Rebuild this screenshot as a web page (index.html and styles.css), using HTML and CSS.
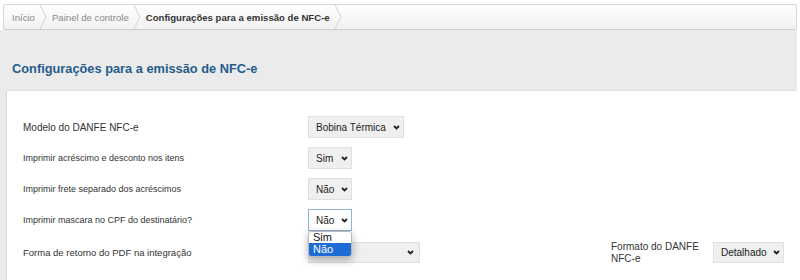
FILE: index.html
```html
<!DOCTYPE html>
<html lang="pt-BR">
<head>
<meta charset="utf-8">
<title>Configurações para a emissão de NFC-e</title>
<link rel="stylesheet" href="styles.css">
</head>
<body>
<nav class="crumbs">
  <a class="crumb">Início</a>
  <svg class="sep" width="8" height="24" viewBox="0 0 8 24"><path d="M1 0 L7 12 L1 24" fill="none" stroke="#d2d2d2" stroke-width="1"/></svg>
  <a class="crumb">Painel de controle</a>
  <svg class="sep" width="8" height="24" viewBox="0 0 8 24"><path d="M1 0 L7 12 L1 24" fill="none" stroke="#d2d2d2" stroke-width="1"/></svg>
  <span class="crumb current">Configurações para a emissão de NFC-e</span>
  <svg class="sep" width="8" height="24" viewBox="0 0 8 24"><path d="M1 0 L7 12 L1 24" fill="none" stroke="#d2d2d2" stroke-width="1"/></svg>
</nav>
<main class="main">
  <h1 class="title">Configurações para a emissão de NFC-e</h1>
  <section class="panel">
    <div class="row">
      <label class="label big">Modelo do DANFE NFC-e</label>
      <span class="select w-bobina">Bobina Térmica<svg class="chev" width="7" height="5" viewBox="0 0 7 5"><path d="M1 1 L3.5 3.5 L6 1" fill="none" stroke="#222" stroke-width="1.8"/></svg></span>
    </div>
    <div class="row">
      <label class="label">Imprimir acréscimo e desconto nos itens</label>
      <span class="select w-simnao">Sim<svg class="chev" width="7" height="5" viewBox="0 0 7 5"><path d="M1 1 L3.5 3.5 L6 1" fill="none" stroke="#222" stroke-width="1.8"/></svg></span>
    </div>
    <div class="row">
      <label class="label">Imprimir frete separado dos acréscimos</label>
      <span class="select w-simnao">Não<svg class="chev" width="7" height="5" viewBox="0 0 7 5"><path d="M1 1 L3.5 3.5 L6 1" fill="none" stroke="#222" stroke-width="1.8"/></svg></span>
    </div>
    <div class="row">
      <label class="label">Imprimir mascara no CPF do destinatário?</label>
      <span class="select-wrap">
        <span class="select w-simnao focused">Não<svg class="chev" width="7" height="5" viewBox="0 0 7 5"><path d="M1 1 L3.5 3.5 L6 1" fill="none" stroke="#222" stroke-width="1.8"/></svg></span>
        <ul class="dropdown">
          <li class="opt">Sim</li>
          <li class="opt active">Não</li>
        </ul>
      </span>
    </div>
    <div class="row last">
      <label class="label mid">Forma de retorno do PDF na integração</label>
      <span class="select w-forma"><svg class="chev" width="7" height="5" viewBox="0 0 7 5"><path d="M1 1 L3.5 3.5 L6 1" fill="none" stroke="#222" stroke-width="1.8"/></svg></span>
      <label class="label big side">Formato do DANFE NFC-e</label>
      <span class="select w-detalhado">Detalhado<svg class="chev" width="7" height="5" viewBox="0 0 7 5"><path d="M1 1 L3.5 3.5 L6 1" fill="none" stroke="#222" stroke-width="1.8"/></svg></span>
    </div>
  </section>
</main>
</body>
</html>
```

FILE: styles.css
```css
* { box-sizing: border-box; }
html, body { margin: 0; padding: 0; }
body {
  background: #fff;
  font-family: "Liberation Sans", Arial, sans-serif;
  color: #333;
  width: 800px;
  height: 280px;
  overflow: hidden;
}

.crumbs {
  margin: 4px 3px 0 3px;
  height: 26px;
  border: 1px solid #d6d6d6;
  border-bottom-color: #cbcbcb;
  border-radius: 2px;
  background: linear-gradient(#ffffff, #f1f1f1);
  display: flex;
  align-items: center;
  padding-left: 8px;
  font-size: 9.6px;
}
.crumb {
  color: #8a8a8a;
  text-decoration: none;
}
.crumb.current {
  color: #333;
  font-weight: bold;
}
.sep {
  display: block;
  margin: 0 5px 0 4px;
}

.main {
  background: #ebebeb;
  margin-right: 3px;
  padding-top: 31px;
}
.title {
  margin: 0 0 13px 12px;
  font-size: 12.8px;
  line-height: 16px;
  font-weight: bold;
  color: #245c8c;
}

.panel {
  margin-left: 6px;
  background: #fff;
  border-left: 1px solid #d9d9d9;
  border-top: 1px solid #e2e2e2;
  padding: 25px 0 18px 16px;
  display: flex;
  flex-direction: column;
  gap: 9px;
}
.row {
  display: flex;
  align-items: center;
  height: 22px;
}
.row.last {
  margin-top: 2px;
  height: 21px;
}
.label {
  width: 285px;
  font-size: 9px;
  color: #333;
  flex: none;
}
.label.big { font-size: 10px; }
.label.mid { font-size: 9.5px; }
.label.side {
  width: 95px;
  margin-left: 191px;
  margin-right: 7px;
  line-height: 12px;
}

.select {
  display: inline-flex;
  align-items: center;
  justify-content: space-between;
  height: 22px;
  padding: 0 3px 0 7px;
  background: #efefef;
  border: 1px solid #e0e0e0;
  font-size: 10px;
  color: #222;
  flex: none;
}
.chev { display: block; flex: none; }
.w-bobina { width: 96px; }
.w-simnao { width: 44px; }
.w-forma { width: 112px; height: 21px; justify-content: flex-end; padding-right: 5px; }
.w-detalhado { width: 71px; height: 21px; }
.select.focused {
  background: #fff;
  border-color: #8fb3d9;
}

.select-wrap {
  position: relative;
  display: inline-block;
  height: 22px;
}
.dropdown {
  position: absolute;
  left: 0;
  top: 22px;
  width: 44px;
  margin: 0;
  padding: 0;
  list-style: none;
  background: #fff;
  border: 1px solid #b9b9b9;
  border-radius: 3px;
  box-shadow: 0 3px 8px rgba(0,0,0,0.3);
  z-index: 10;
  overflow: hidden;
}
.opt {
  font-size: 11px;
  line-height: 11px;
  height: 11px;
  padding-left: 4px;
  color: #111;
}
.opt.active {
  background: #1f6bd6;
  color: #fff;
  height: 13px;
  line-height: 13px;
}
```
